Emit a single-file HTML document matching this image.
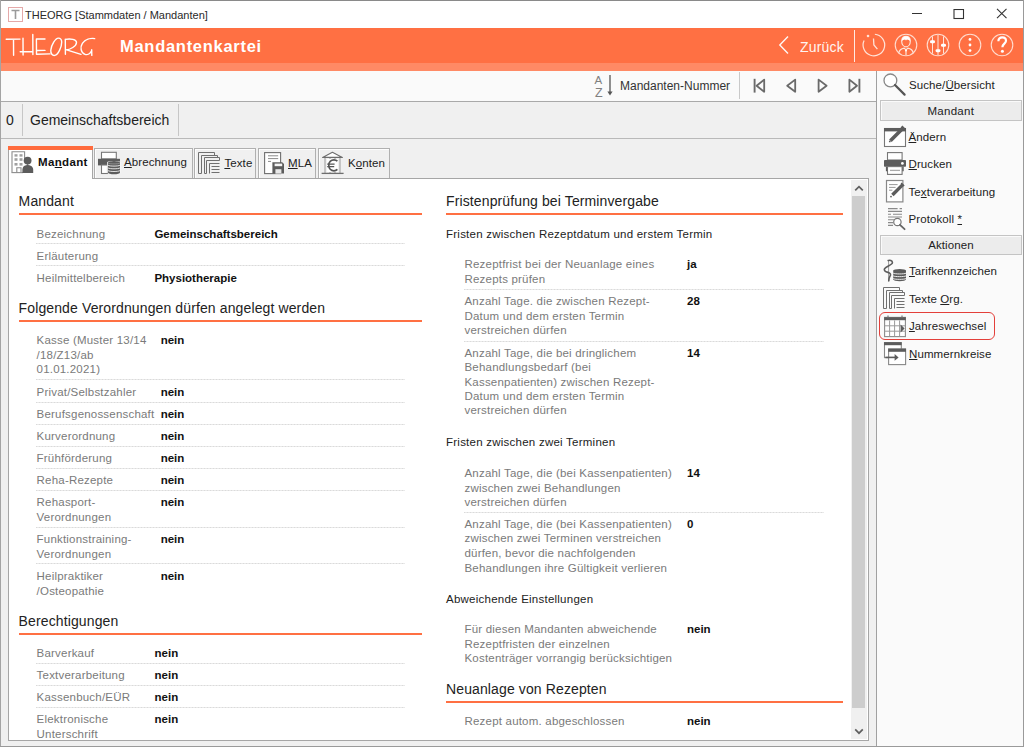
<!DOCTYPE html>
<html><head><meta charset="utf-8">
<style>
*{box-sizing:border-box;margin:0;padding:0}
html,body{width:1024px;height:747px;overflow:hidden;background:#f0f0f0;font-family:"Liberation Sans", sans-serif}
.t{position:absolute;white-space:nowrap}
.r{position:absolute;display:block}
u{text-decoration:underline;text-underline-offset:1px;text-decoration-thickness:1px}
</style></head><body>
<div class="r" style="left:0px;top:0px;width:1024px;height:747px;background:#f0f0f0"></div>
<div class="r" style="left:0px;top:0px;width:1024px;height:28px;background:#fff"></div>
<div class="r" style="left:0px;top:28px;width:1024px;height:35px;background:#ff7043"></div>
<div class="r" style="left:0px;top:63px;width:1024px;height:8px;background:#ff8a65"></div>
<div class="r" style="left:0px;top:71px;width:877px;height:30px;background:#fafafa"></div>
<div class="r" style="left:0px;top:101px;width:877px;height:1px;background:#a9a9a9"></div>
<div class="r" style="left:0px;top:102px;width:877px;height:36px;background:#f0f0f0"></div>
<div class="r" style="left:0px;top:138px;width:877px;height:1px;background:#b9b9b9"></div>
<div class="r" style="left:877px;top:71px;width:147px;height:676px;background:#fafafa"></div>
<div class="r" style="left:876px;top:71px;width:1px;height:676px;background:#a0a0a0"></div>
<div class="r" style="left:0px;top:0px;width:1024px;height:1px;background:#8a8a8a"></div>
<div class="r" style="left:0px;top:0px;width:1px;height:747px;background:#a4a4a4"></div>
<div class="r" style="left:1023px;top:0px;width:1px;height:747px;background:#9a9a9a"></div>
<div class="r" style="left:0px;top:746px;width:1024px;height:1px;background:#9a9a9a"></div>
<svg class="r" style="left:8px;top:7px;" width="15" height="15" viewBox="0 0 15 15"><rect x="0.5" y="0.5" width="14" height="14" fill="#fff" stroke="#e4a9a9"/><path d="M3.5 3.5H11.5M7.5 3.5V12" stroke="#9a9a9a" stroke-width="1.6" fill="none"/></svg>
<div class="t" style="left:25.00px;top:10.00px;font-size:11px;line-height:11px;font-weight:400;color:#2a2a2a;">THEORG [Stammdaten / Mandanten]</div>
<svg class="r" style="left:912px;top:13px;" width="11" height="1" viewBox="0 0 11 1"><rect x="0" y="0" width="10" height="1" fill="#333"/></svg>
<svg class="r" style="left:953px;top:9px;" width="12" height="11" viewBox="0 0 12 11"><rect x="1" y="0.5" width="9.5" height="9" fill="none" stroke="#333" stroke-width="1.1"/></svg>
<svg class="r" style="left:996px;top:8px;" width="12" height="11" viewBox="0 0 12 11"><path d="M1 0.8L10.5 10.2M10.5 0.8L1 10.2" stroke="#333" stroke-width="1.1" fill="none"/></svg>
<svg class="r" style="left:0px;top:28px;" width="100" height="35" viewBox="0 0 100 35"><g transform="translate(0,-28)"><g stroke="#fff" stroke-width="1.4" fill="none" stroke-linecap="round" stroke-linejoin="round"><path d="M6.2 39.3L20 39.1M13.5 39.3L13.6 55.2"/><path d="M23 38.3L23.1 55M20.2 51.8L32.8 51.8M32.8 34.4L32.9 54.5"/><path d="M45 39L36.4 39L36.5 54.2L50 53.9M36.5 50.5L45 50.4"/><path d="M58.4 38.1C55.6 38.1 51.2 44.6 50.8 50.2C50.6 53.8 52.4 55.8 54.8 55.4C58.4 54.6 61.8 46.6 61.7 42C61.6 39.6 60.4 38.1 58.4 38.1Z"/><path d="M65.3 39.1L65.4 54.3M65.3 39.4C70.6 38.4 76.6 39.4 76.5 42.4C76.4 46.2 70.4 49.6 65.6 50M67.4 50.2L81 54.3"/><path d="M94.7 38.6C90.6 38 85.2 39.4 82.4 43.4C80 47 80.6 53 85 54.4C87.6 55.2 90.4 53.6 91.7 50.6M91.7 49.8L91.8 55.4"/></g></g></svg>
<div class="t" style="left:120.00px;top:38.00px;font-size:16.5px;line-height:16.5px;font-weight:700;color:#ffffff;letter-spacing:0.72px">Mandantenkartei</div>
<svg class="r" style="left:777px;top:35px;" width="14" height="20" viewBox="0 0 14 20"><path d="M11 1.5L2.8 10L11 18.5" stroke="#fff" stroke-width="1.4" fill="none" stroke-opacity="0.95"/></svg>
<div class="t" style="left:800.00px;top:40.00px;font-size:14px;line-height:14px;font-weight:400;color:#ffffff;opacity:0.93;letter-spacing:0.2px">Zurück</div>
<div class="r" style="left:854px;top:30px;width:1px;height:32px;background:rgba(255,255,255,0.85)"></div>
<svg class="r" style="left:860px;top:32px;" width="28" height="26" viewBox="0 0 28 26"><path d="M14.84 2.24A10.8 10.8 0 1 1 4.11 8.44" stroke="#ffe3d8" stroke-width="1.2" fill="none"/><circle cx="8.02" cy="3.94" r="1.3" fill="#ffe3d8"/><path d="M13.5 6.5L13.9 13L17.4 17.1" stroke="#ffe3d8" stroke-width="1.3" fill="none"/></svg>
<svg class="r" style="left:893px;top:32px;" width="26" height="26" viewBox="0 0 26 26"><circle cx="13" cy="13" r="10.8" stroke="#ffdccf" stroke-width="1.1" fill="none"/><path d="M8.7 9.2C8.7 5.8 10.6 4.3 13 4.3C15.4 4.3 17.3 5.8 17.3 9.2C17.3 12.4 15.4 14.8 13 14.8C10.6 14.8 8.7 12.4 8.7 9.2Z" stroke="#ffe3d8" stroke-width="1.2" fill="none"/><path d="M8.7 9.2C8.7 5.8 10.6 4.3 13 4.3C15.4 4.3 17.3 5.8 17.3 9.2C16.4 8.2 15.2 7.8 13.9 7.6L13 8.6L12.1 7.6C10.8 7.8 9.6 8.2 8.7 9.2Z" fill="#fff"/><path d="M5.6 21.4C6.2 18.4 8.6 16.6 11.2 16.2L13 18L14.8 16.2C17.4 16.6 19.8 18.4 20.4 21.4M13 18.2V23" stroke="#ffe3d8" stroke-width="1.2" fill="none"/><circle cx="13" cy="18.6" r="1" fill="#fff"/></svg>
<svg class="r" style="left:925px;top:32px;" width="26" height="26" viewBox="0 0 26 26"><circle cx="13" cy="13" r="10.8" stroke="#ffdccf" stroke-width="1.1" fill="none"/><path d="M7.5 4.5V21.5M13 3V23M18.5 4.5V21.5" stroke="#ffe3d8" stroke-width="1" fill="none"/><rect x="5" y="8.3" width="5" height="3" rx="1.4" fill="#fff"/><rect x="10.5" y="17.2" width="5" height="3" rx="1.4" fill="#fff"/><rect x="16" y="11.8" width="5" height="3" rx="1.4" fill="#fff"/></svg>
<svg class="r" style="left:957px;top:32px;" width="26" height="26" viewBox="0 0 26 26"><circle cx="13" cy="13" r="10.8" stroke="#ffdccf" stroke-width="1.1" fill="none"/><circle cx="13" cy="7.4" r="1.4" fill="#fff"/><circle cx="13" cy="13" r="1.4" fill="#fff"/><circle cx="13" cy="18.6" r="1.4" fill="#fff"/></svg>
<svg class="r" style="left:989px;top:32px;" width="26" height="26" viewBox="0 0 26 26"><circle cx="13" cy="13" r="10.8" stroke="#ffdccf" stroke-width="1.1" fill="none"/><path d="M9.4 9.2C9.4 6.6 11 5.4 13.2 5.4C15.6 5.4 17 6.9 17 8.8C17 11.6 13.4 11.8 13.4 15.2" stroke="#fff" stroke-width="2.2" fill="none"/><circle cx="13.4" cy="19.2" r="1.5" fill="#fff"/></svg>
<div class="t" style="left:594.60px;top:75.00px;font-size:11.5px;line-height:11.5px;font-weight:400;color:#808080;">A</div>
<div class="t" style="left:595.00px;top:87.00px;font-size:12.5px;line-height:12.5px;font-weight:400;color:#808080;">Z</div>
<svg class="r" style="left:606px;top:74px;" width="8" height="23" viewBox="0 0 8 23"><path d="M4 1V20" stroke="#555" stroke-width="1.3"/><path d="M1.4 17.5L4 21.5L6.6 17.5Z" fill="#555"/></svg>
<div class="t" style="left:620.00px;top:80.00px;font-size:12px;line-height:12px;font-weight:400;color:#333;">Mandanten-Nummer</div>
<div class="r" style="left:739px;top:72px;width:1px;height:27px;background:#c9c9c9"></div>
<svg class="r" style="left:753px;top:78px;" width="14" height="16" viewBox="0 0 14 16"><path d="M1.6 0.8V14.6" stroke="#6a6a6a" stroke-width="1.9"/><path d="M11.2 1.6L3.6 7.7L11.2 13.8Z" stroke="#6a6a6a" stroke-width="1.8" fill="none" stroke-linejoin="round"/></svg>
<svg class="r" style="left:784px;top:78px;" width="14" height="16" viewBox="0 0 14 16"><path d="M11.2 1.6L3.2 7.7L11.2 13.8Z" stroke="#6a6a6a" stroke-width="1.8" fill="none" stroke-linejoin="round"/></svg>
<svg class="r" style="left:817px;top:78px;" width="14" height="16" viewBox="0 0 14 16"><path d="M1.6 1.6L9.6 7.7L1.6 13.8Z" stroke="#6a6a6a" stroke-width="1.8" fill="none" stroke-linejoin="round"/></svg>
<svg class="r" style="left:848px;top:78px;" width="14" height="16" viewBox="0 0 14 16"><path d="M1.4 1.6L9 7.7L1.4 13.8Z" stroke="#6a6a6a" stroke-width="1.8" fill="none" stroke-linejoin="round"/><path d="M11.4 0.8V14.6" stroke="#6a6a6a" stroke-width="1.9"/></svg>
<div class="t" style="left:6.00px;top:113.00px;font-size:14px;line-height:14px;font-weight:400;color:#222;">0</div>
<div class="r" style="left:22px;top:104px;width:1px;height:32px;background:#c6c6c6"></div>
<div class="t" style="left:30.00px;top:113.00px;font-size:14px;line-height:14px;font-weight:400;color:#222;">Gemeinschaftsbereich</div>
<div class="r" style="left:178px;top:104px;width:1px;height:32px;background:#c6c6c6"></div>
<div class="r" style="left:94px;top:148px;width:99px;height:30px;background:#f0f0f0;border:1px solid #b0b0b0;border-bottom:none;box-shadow:inset 1px 1px 0 #fdfdfd"></div>
<div class="r" style="left:194px;top:148px;width:62px;height:30px;background:#f0f0f0;border:1px solid #b0b0b0;border-bottom:none;box-shadow:inset 1px 1px 0 #fdfdfd"></div>
<div class="r" style="left:258px;top:148px;width:58px;height:30px;background:#f0f0f0;border:1px solid #b0b0b0;border-bottom:none;box-shadow:inset 1px 1px 0 #fdfdfd"></div>
<div class="r" style="left:318px;top:148px;width:72px;height:30px;background:#f0f0f0;border:1px solid #b0b0b0;border-bottom:none;box-shadow:inset 1px 1px 0 #fdfdfd"></div>
<div class="r" style="left:8px;top:178px;width:861px;height:563px;background:#fff;border:1px solid #a6a6a6"></div>
<div class="r" style="left:8px;top:146px;width:85px;height:33px;background:#fff;border-left:1px solid #a6a6a6;border-right:1px solid #a6a6a6"></div>
<div class="r" style="left:8px;top:146px;width:85px;height:4px;background:#ff6b3d"></div>
<div class="t" style="left:38.00px;top:157.00px;font-size:11.5px;line-height:11.5px;font-weight:700;color:#111;letter-spacing:0.35px;">Ma<u>n</u>dant</div>
<div class="t" style="left:124.00px;top:157.00px;font-size:11.5px;line-height:11.5px;font-weight:400;color:#222;letter-spacing:0.1px;"><u>A</u>brechnung</div>
<div class="t" style="left:224.40px;top:158.00px;font-size:11.5px;line-height:11.5px;font-weight:400;color:#222;letter-spacing:0.1px;"><u>T</u>exte</div>
<div class="t" style="left:288.00px;top:158.00px;font-size:11.5px;line-height:11.5px;font-weight:400;color:#222;letter-spacing:0.1px;"><u>M</u>LA</div>
<div class="t" style="left:348.00px;top:158.00px;font-size:11.5px;line-height:11.5px;font-weight:400;color:#222;letter-spacing:0.1px;">K<u>o</u>nten</div>
<svg class="r" style="left:10px;top:150px;" width="26" height="25" viewBox="0 0 26 25"><path d="M2 22.5V1.8H14.6V12" stroke="#8c8c8c" stroke-width="1.1" fill="none"/><g fill="#a0a0a0"><rect x="4.5" y="4.2" width="3" height="2.4"/><rect x="9.5" y="4.2" width="3" height="2.4"/><rect x="4.5" y="8.2" width="3" height="2.6"/><rect x="9.5" y="8.2" width="3" height="2.6"/><rect x="4.5" y="13" width="3" height="2.6"/><rect x="9.5" y="13" width="3" height="2.6"/></g><path d="M6.8 22.5V17.8H11V22.5" stroke="#8c8c8c" stroke-width="1.1" fill="none"/><path d="M1.5 22.6H13" stroke="#8c8c8c" stroke-width="1.1"/><circle cx="17.6" cy="10.6" r="3.9" fill="#5c5c5c"/><path d="M12.4 23V19.4C12.4 16.6 14.6 15.4 16.4 15.2L17.6 14L18.8 15.2C20.6 15.4 23.2 16.6 23.2 19.4V23Z" fill="#5c5c5c"/></svg>
<svg class="r" style="left:96px;top:150px;" width="26" height="25" viewBox="0 0 26 25"><rect x="5.5" y="2.3" width="14.8" height="6.6" fill="#fff" stroke="#777" stroke-width="1.1"/><rect x="2" y="8.8" width="22" height="6.6" fill="#5c5c5c"/><rect x="5.5" y="15" width="6" height="8.5" fill="#fff" stroke="#777" stroke-width="1.1"/><path d="M11.2 12.4C11.2 10.6 24.8 10.6 24.8 12.4V22.6C24.8 24.6 11.2 24.6 11.2 22.6Z" fill="#f6f6f6"/><g fill="#5c5c5c"><ellipse cx="18" cy="12.6" rx="6" ry="1.7"/><rect x="12" y="12.6" width="12" height="9.9"/><ellipse cx="18" cy="22.5" rx="6" ry="1.7"/></g><path d="M12 15.2C13.6 16.4 22.4 16.4 24 15.2M12 17.9C13.6 19.1 22.4 19.1 24 17.9M12 20.6C13.6 21.8 22.4 21.8 24 20.6" stroke="#f0f0f0" stroke-width="0.9" fill="none"/><path d="M12 13C13.6 14.2 22.4 14.2 24 13" stroke="#aaa" stroke-width="0.6" fill="none"/></svg>
<svg class="r" style="left:197px;top:151px;" width="24" height="24" viewBox="0 0 24 24"><g stroke="#707070" stroke-width="1" fill="none"><path d="M1.5 22.5V1.5H17.5V4.5"/><path d="M4.5 22.5V4.5H20.5V6.5"/><path d="M7.5 22.5V6.5H22.5V9.5"/><path d="M9.5 22.5V9.5H22.5"/><path d="M12.5 22.5V12.5H22.5"/><path d="M1.5 22.5H4.5M7.5 22.5H9.5"/><path d="M14.5 15.5H22.5M14.5 18.5H22.5M14.5 21.5H22.5"/></g></svg>
<svg class="r" style="left:262px;top:150px;" width="26" height="25" viewBox="0 0 26 25"><rect x="2.6" y="2.6" width="16" height="21" fill="#fff" stroke="#6e6e6e" stroke-width="1.1"/><path d="M6 5.8H16.2M6 8.6H16.2M6 11.4H9" stroke="#8a8a8a" stroke-width="1"/><path d="M10.4 12.2H20.2L22 14V23.6H10.4Z" fill="#5c5c5c"/><rect x="12.6" y="13.6" width="7.6" height="2.6" fill="#f4f4f4"/><rect x="13.4" y="19.2" width="6" height="4.4" fill="#e8e8e8"/></svg>
<svg class="r" style="left:320px;top:150px;" width="26" height="25" viewBox="0 0 26 25"><path d="M2.6 7.4L12.4 2.2L22.4 7.4Z" fill="#fff" stroke="#6e6e6e" stroke-width="1.1" stroke-linejoin="round"/><path d="M5 8V23M10 8V23M15 8V23M20 8V23" stroke="#9a9a9a" stroke-width="1"/><path d="M1.6 23.4H23.6" stroke="#6e6e6e" stroke-width="1.3"/><path d="M2 23H23" stroke="none"/><rect x="7" y="9" width="11" height="13" fill="#fff"/><path d="M17.4 11.2C16.4 10.2 15.2 9.8 14 9.8C10.9 9.8 8.8 12.3 8.8 15.3C8.8 18.3 10.9 20.8 14 20.8C15.2 20.8 16.4 20.4 17.4 19.4" stroke="#555" stroke-width="1.7" fill="none"/><path d="M7.2 14.1H14.6M7.2 16.7H14.2" stroke="#555" stroke-width="1.2"/></svg>
<div class="r" style="left:851px;top:180px;width:16px;height:559px;background:#f0f0f0"></div>
<div class="r" style="left:852px;top:196px;width:13px;height:512px;background:#cdcdcd"></div>
<svg class="r" style="left:852px;top:183px;" width="14" height="11" viewBox="0 0 14 11"><path d="M3.2 7.4L7 3.6L10.8 7.4" stroke="#606060" stroke-width="1.7" fill="none"/></svg>
<svg class="r" style="left:852px;top:726px;" width="14" height="11" viewBox="0 0 14 11"><path d="M3.2 3.4L7 7.2L10.8 3.4" stroke="#606060" stroke-width="1.7" fill="none"/></svg>
<div class="t" style="left:18.60px;top:194.00px;font-size:14px;line-height:14px;font-weight:400;color:#222;letter-spacing:0.12px;">Mandant</div>
<div class="r" style="left:18.6px;top:213px;width:403.4px;height:2px;background:#ff7043"></div>
<div class="t" style="left:36.60px;top:229.00px;font-size:11.5px;line-height:11.5px;font-weight:400;color:#7a7a7a;letter-spacing:0.2px;">Bezeichnung</div>
<div class="t" style="left:154.40px;top:229.00px;font-size:11.5px;line-height:11.5px;font-weight:700;color:#111;">Gemeinschaftsbereich</div>
<div class="r" style="left:36px;top:243px;width:369px;height:1px;background-image:linear-gradient(90deg,#dadada 50%,#e9e9e9 50%);background-size:3px 1px"></div>
<div class="t" style="left:36.60px;top:251.00px;font-size:11.5px;line-height:11.5px;font-weight:400;color:#7a7a7a;letter-spacing:0.2px;">Erläuterung</div>
<div class="r" style="left:36px;top:265px;width:369px;height:1px;background-image:linear-gradient(90deg,#dadada 50%,#e9e9e9 50%);background-size:3px 1px"></div>
<div class="t" style="left:36.60px;top:273.00px;font-size:11.5px;line-height:11.5px;font-weight:400;color:#7a7a7a;letter-spacing:0.2px;">Heilmittelbereich</div>
<div class="t" style="left:154.40px;top:273.00px;font-size:11.5px;line-height:11.5px;font-weight:700;color:#111;">Physiotherapie</div>
<div class="t" style="left:18.60px;top:301.00px;font-size:14px;line-height:14px;font-weight:400;color:#222;letter-spacing:0.12px;">Folgende Verordnungen dürfen angelegt werden</div>
<div class="r" style="left:18.6px;top:320px;width:403.4px;height:2px;background:#ff7043"></div>
<div class="t" style="left:36.60px;top:335.00px;font-size:11.5px;line-height:11.5px;font-weight:400;color:#7a7a7a;letter-spacing:0.2px;">Kasse (Muster 13/14</div>
<div class="t" style="left:36.60px;top:350.00px;font-size:11.5px;line-height:11.5px;font-weight:400;color:#7a7a7a;letter-spacing:0.2px;">/18/Z13/ab</div>
<div class="t" style="left:36.60px;top:364.00px;font-size:11.5px;line-height:11.5px;font-weight:400;color:#7a7a7a;letter-spacing:0.2px;">01.01.2021)</div>
<div class="t" style="left:160.70px;top:335.00px;font-size:11.5px;line-height:11.5px;font-weight:700;color:#111;">nein</div>
<div class="r" style="left:36px;top:379px;width:369px;height:1px;background-image:linear-gradient(90deg,#dadada 50%,#e9e9e9 50%);background-size:3px 1px"></div>
<div class="t" style="left:36.60px;top:387.00px;font-size:11.5px;line-height:11.5px;font-weight:400;color:#7a7a7a;letter-spacing:0.2px;">Privat/Selbstzahler</div>
<div class="t" style="left:160.70px;top:387.00px;font-size:11.5px;line-height:11.5px;font-weight:700;color:#111;">nein</div>
<div class="r" style="left:36px;top:402px;width:369px;height:1px;background-image:linear-gradient(90deg,#dadada 50%,#e9e9e9 50%);background-size:3px 1px"></div>
<div class="t" style="left:36.60px;top:409.00px;font-size:11.5px;line-height:11.5px;font-weight:400;color:#7a7a7a;letter-spacing:0.2px;">Berufsgenossenschaft</div>
<div class="t" style="left:160.70px;top:409.00px;font-size:11.5px;line-height:11.5px;font-weight:700;color:#111;">nein</div>
<div class="r" style="left:36px;top:424px;width:369px;height:1px;background-image:linear-gradient(90deg,#dadada 50%,#e9e9e9 50%);background-size:3px 1px"></div>
<div class="t" style="left:36.60px;top:431.00px;font-size:11.5px;line-height:11.5px;font-weight:400;color:#7a7a7a;letter-spacing:0.2px;">Kurverordnung</div>
<div class="t" style="left:160.70px;top:431.00px;font-size:11.5px;line-height:11.5px;font-weight:700;color:#111;">nein</div>
<div class="r" style="left:36px;top:446px;width:369px;height:1px;background-image:linear-gradient(90deg,#dadada 50%,#e9e9e9 50%);background-size:3px 1px"></div>
<div class="t" style="left:36.60px;top:453.00px;font-size:11.5px;line-height:11.5px;font-weight:400;color:#7a7a7a;letter-spacing:0.2px;">Frühförderung</div>
<div class="t" style="left:160.70px;top:453.00px;font-size:11.5px;line-height:11.5px;font-weight:700;color:#111;">nein</div>
<div class="r" style="left:36px;top:468px;width:369px;height:1px;background-image:linear-gradient(90deg,#dadada 50%,#e9e9e9 50%);background-size:3px 1px"></div>
<div class="t" style="left:36.60px;top:475.00px;font-size:11.5px;line-height:11.5px;font-weight:400;color:#7a7a7a;letter-spacing:0.2px;">Reha-Rezepte</div>
<div class="t" style="left:160.70px;top:475.00px;font-size:11.5px;line-height:11.5px;font-weight:700;color:#111;">nein</div>
<div class="r" style="left:36px;top:490px;width:369px;height:1px;background-image:linear-gradient(90deg,#dadada 50%,#e9e9e9 50%);background-size:3px 1px"></div>
<div class="t" style="left:36.60px;top:497.00px;font-size:11.5px;line-height:11.5px;font-weight:400;color:#7a7a7a;letter-spacing:0.2px;">Rehasport-</div>
<div class="t" style="left:36.60px;top:512.00px;font-size:11.5px;line-height:11.5px;font-weight:400;color:#7a7a7a;letter-spacing:0.2px;">Verordnungen</div>
<div class="t" style="left:160.70px;top:497.00px;font-size:11.5px;line-height:11.5px;font-weight:700;color:#111;">nein</div>
<div class="r" style="left:36px;top:527px;width:369px;height:1px;background-image:linear-gradient(90deg,#dadada 50%,#e9e9e9 50%);background-size:3px 1px"></div>
<div class="t" style="left:36.60px;top:534.00px;font-size:11.5px;line-height:11.5px;font-weight:400;color:#7a7a7a;letter-spacing:0.2px;">Funktionstraining-</div>
<div class="t" style="left:36.60px;top:549.00px;font-size:11.5px;line-height:11.5px;font-weight:400;color:#7a7a7a;letter-spacing:0.2px;">Verordnungen</div>
<div class="t" style="left:160.70px;top:534.00px;font-size:11.5px;line-height:11.5px;font-weight:700;color:#111;">nein</div>
<div class="r" style="left:36px;top:563px;width:369px;height:1px;background-image:linear-gradient(90deg,#dadada 50%,#e9e9e9 50%);background-size:3px 1px"></div>
<div class="t" style="left:36.60px;top:571.00px;font-size:11.5px;line-height:11.5px;font-weight:400;color:#7a7a7a;letter-spacing:0.2px;">Heilpraktiker</div>
<div class="t" style="left:36.60px;top:586.00px;font-size:11.5px;line-height:11.5px;font-weight:400;color:#7a7a7a;letter-spacing:0.2px;">/Osteopathie</div>
<div class="t" style="left:160.70px;top:571.00px;font-size:11.5px;line-height:11.5px;font-weight:700;color:#111;">nein</div>
<div class="t" style="left:18.60px;top:614.00px;font-size:14px;line-height:14px;font-weight:400;color:#222;letter-spacing:0.12px;">Berechtigungen</div>
<div class="r" style="left:18.6px;top:633px;width:403.4px;height:2px;background:#ff7043"></div>
<div class="t" style="left:36.60px;top:648.00px;font-size:11.5px;line-height:11.5px;font-weight:400;color:#7a7a7a;letter-spacing:0.2px;">Barverkauf</div>
<div class="t" style="left:154.60px;top:648.00px;font-size:11.5px;line-height:11.5px;font-weight:700;color:#111;">nein</div>
<div class="r" style="left:36px;top:663px;width:369px;height:1px;background-image:linear-gradient(90deg,#dadada 50%,#e9e9e9 50%);background-size:3px 1px"></div>
<div class="t" style="left:36.60px;top:670.00px;font-size:11.5px;line-height:11.5px;font-weight:400;color:#7a7a7a;letter-spacing:0.2px;">Textverarbeitung</div>
<div class="t" style="left:154.60px;top:670.00px;font-size:11.5px;line-height:11.5px;font-weight:700;color:#111;">nein</div>
<div class="r" style="left:36px;top:685px;width:369px;height:1px;background-image:linear-gradient(90deg,#dadada 50%,#e9e9e9 50%);background-size:3px 1px"></div>
<div class="t" style="left:36.60px;top:692.00px;font-size:11.5px;line-height:11.5px;font-weight:400;color:#7a7a7a;letter-spacing:0.2px;">Kassenbuch/EÜR</div>
<div class="t" style="left:154.60px;top:692.00px;font-size:11.5px;line-height:11.5px;font-weight:700;color:#111;">nein</div>
<div class="r" style="left:36px;top:707px;width:369px;height:1px;background-image:linear-gradient(90deg,#dadada 50%,#e9e9e9 50%);background-size:3px 1px"></div>
<div class="t" style="left:36.60px;top:714.00px;font-size:11.5px;line-height:11.5px;font-weight:400;color:#7a7a7a;letter-spacing:0.2px;">Elektronische</div>
<div class="t" style="left:36.60px;top:729.00px;font-size:11.5px;line-height:11.5px;font-weight:400;color:#7a7a7a;letter-spacing:0.2px;">Unterschrift</div>
<div class="t" style="left:154.60px;top:714.00px;font-size:11.5px;line-height:11.5px;font-weight:700;color:#111;">nein</div>
<div class="t" style="left:446.00px;top:194.00px;font-size:14px;line-height:14px;font-weight:400;color:#222;letter-spacing:0.12px;">Fristenprüfung bei Terminvergabe</div>
<div class="r" style="left:446px;top:213px;width:397px;height:2px;background:#ff7043"></div>
<div class="t" style="left:446.00px;top:229.00px;font-size:11.5px;line-height:11.5px;font-weight:400;color:#222;letter-spacing:0.24px;">Fristen zwischen Rezeptdatum und erstem Termin</div>
<div class="t" style="left:464.50px;top:259.00px;font-size:11.5px;line-height:11.5px;font-weight:400;color:#7a7a7a;letter-spacing:0.2px;">Rezeptfrist bei der Neuanlage eines</div>
<div class="t" style="left:464.50px;top:274.00px;font-size:11.5px;line-height:11.5px;font-weight:400;color:#7a7a7a;letter-spacing:0.2px;">Rezepts prüfen</div>
<div class="t" style="left:687.00px;top:259.00px;font-size:11.5px;line-height:11.5px;font-weight:700;color:#111;">ja</div>
<div class="r" style="left:464px;top:289px;width:360px;height:1px;background-image:linear-gradient(90deg,#dadada 50%,#e9e9e9 50%);background-size:3px 1px"></div>
<div class="t" style="left:464.50px;top:296.00px;font-size:11.5px;line-height:11.5px;font-weight:400;color:#7a7a7a;letter-spacing:0.2px;">Anzahl Tage. die zwischen Rezept-</div>
<div class="t" style="left:464.50px;top:311.00px;font-size:11.5px;line-height:11.5px;font-weight:400;color:#7a7a7a;letter-spacing:0.2px;">Datum und dem ersten Termin</div>
<div class="t" style="left:464.50px;top:325.00px;font-size:11.5px;line-height:11.5px;font-weight:400;color:#7a7a7a;letter-spacing:0.2px;">verstreichen dürfen</div>
<div class="t" style="left:687.00px;top:296.00px;font-size:11.5px;line-height:11.5px;font-weight:700;color:#111;">28</div>
<div class="r" style="left:464px;top:341px;width:360px;height:1px;background-image:linear-gradient(90deg,#dadada 50%,#e9e9e9 50%);background-size:3px 1px"></div>
<div class="t" style="left:464.50px;top:348.00px;font-size:11.5px;line-height:11.5px;font-weight:400;color:#7a7a7a;letter-spacing:0.2px;">Anzahl Tage, die bei dringlichem</div>
<div class="t" style="left:464.50px;top:362.00px;font-size:11.5px;line-height:11.5px;font-weight:400;color:#7a7a7a;letter-spacing:0.2px;">Behandlungsbedarf (bei</div>
<div class="t" style="left:464.50px;top:377.00px;font-size:11.5px;line-height:11.5px;font-weight:400;color:#7a7a7a;letter-spacing:0.2px;">Kassenpatienten) zwischen Rezept-</div>
<div class="t" style="left:464.50px;top:391.00px;font-size:11.5px;line-height:11.5px;font-weight:400;color:#7a7a7a;letter-spacing:0.2px;">Datum und dem ersten Termin</div>
<div class="t" style="left:464.50px;top:405.00px;font-size:11.5px;line-height:11.5px;font-weight:400;color:#7a7a7a;letter-spacing:0.2px;">verstreichen dürfen</div>
<div class="t" style="left:687.00px;top:348.00px;font-size:11.5px;line-height:11.5px;font-weight:700;color:#111;">14</div>
<div class="t" style="left:446.00px;top:437.00px;font-size:11.5px;line-height:11.5px;font-weight:400;color:#222;letter-spacing:0.24px;">Fristen zwischen zwei Terminen</div>
<div class="t" style="left:464.50px;top:468.00px;font-size:11.5px;line-height:11.5px;font-weight:400;color:#7a7a7a;letter-spacing:0.2px;">Anzahl Tage, die (bei Kassenpatienten)</div>
<div class="t" style="left:464.50px;top:483.00px;font-size:11.5px;line-height:11.5px;font-weight:400;color:#7a7a7a;letter-spacing:0.2px;">zwischen zwei Behandlungen</div>
<div class="t" style="left:464.50px;top:497.00px;font-size:11.5px;line-height:11.5px;font-weight:400;color:#7a7a7a;letter-spacing:0.2px;">verstreichen dürfen</div>
<div class="t" style="left:687.00px;top:468.00px;font-size:11.5px;line-height:11.5px;font-weight:700;color:#111;">14</div>
<div class="r" style="left:464px;top:512px;width:360px;height:1px;background-image:linear-gradient(90deg,#dadada 50%,#e9e9e9 50%);background-size:3px 1px"></div>
<div class="t" style="left:464.50px;top:519.00px;font-size:11.5px;line-height:11.5px;font-weight:400;color:#7a7a7a;letter-spacing:0.2px;">Anzahl Tage, die (bei Kassenpatienten)</div>
<div class="t" style="left:464.50px;top:533.00px;font-size:11.5px;line-height:11.5px;font-weight:400;color:#7a7a7a;letter-spacing:0.2px;">zwischen zwei Terminen verstreichen</div>
<div class="t" style="left:464.50px;top:548.00px;font-size:11.5px;line-height:11.5px;font-weight:400;color:#7a7a7a;letter-spacing:0.2px;">dürfen, bevor die nachfolgenden</div>
<div class="t" style="left:464.50px;top:563.00px;font-size:11.5px;line-height:11.5px;font-weight:400;color:#7a7a7a;letter-spacing:0.2px;">Behandlungen ihre Gültigkeit verlieren</div>
<div class="t" style="left:687.00px;top:519.00px;font-size:11.5px;line-height:11.5px;font-weight:700;color:#111;">0</div>
<div class="t" style="left:446.00px;top:594.00px;font-size:11.5px;line-height:11.5px;font-weight:400;color:#222;letter-spacing:0.24px;">Abweichende Einstellungen</div>
<div class="t" style="left:464.50px;top:624.00px;font-size:11.5px;line-height:11.5px;font-weight:400;color:#7a7a7a;letter-spacing:0.2px;">Für diesen Mandanten abweichende</div>
<div class="t" style="left:464.50px;top:639.00px;font-size:11.5px;line-height:11.5px;font-weight:400;color:#7a7a7a;letter-spacing:0.2px;">Rezeptfristen der einzelnen</div>
<div class="t" style="left:464.50px;top:653.00px;font-size:11.5px;line-height:11.5px;font-weight:400;color:#7a7a7a;letter-spacing:0.2px;">Kostenträger vorrangig berücksichtigen</div>
<div class="t" style="left:687.00px;top:624.00px;font-size:11.5px;line-height:11.5px;font-weight:700;color:#111;">nein</div>
<div class="t" style="left:446.00px;top:682.00px;font-size:14px;line-height:14px;font-weight:400;color:#222;letter-spacing:0.12px;">Neuanlage von Rezepten</div>
<div class="r" style="left:446px;top:701px;width:397px;height:2px;background:#ff7043"></div>
<div class="t" style="left:464.50px;top:716.00px;font-size:11.5px;line-height:11.5px;font-weight:400;color:#7a7a7a;letter-spacing:0.2px;">Rezept autom. abgeschlossen</div>
<div class="t" style="left:687.00px;top:716.00px;font-size:11.5px;line-height:11.5px;font-weight:700;color:#111;">nein</div>
<svg class="r" style="left:882px;top:72px;" width="26" height="26" viewBox="0 0 26 26"><circle cx="8.4" cy="8.4" r="6.4" fill="#fff" stroke="#888" stroke-width="1.3"/><path d="M13 13L22.6 22.6" stroke="#555" stroke-width="2.2" stroke-linecap="round"/></svg>
<div class="t" style="left:909.00px;top:80.00px;font-size:11.5px;line-height:11.5px;font-weight:400;color:#222;letter-spacing:0.1px;">Suche/<u>Ü</u>bersicht</div>
<div class="r" style="left:880px;top:100px;width:142px;height:21px;background:#ececec;border:1px solid #c4c4c4;box-shadow:inset 1px 1px 0 #fafafa"></div>
<div class="t" style="left:927.40px;top:106.00px;font-size:11.5px;line-height:11.5px;font-weight:400;color:#222;letter-spacing:0.3px;">Mandant</div>
<svg class="r" style="left:883px;top:124px;" width="24" height="24" viewBox="0 0 24 24"><rect x="1.5" y="4.5" width="21" height="18" fill="#fff" stroke="#777" stroke-width="1.1"/><rect x="1" y="4" width="22" height="3.4" fill="#5c5c5c"/><path d="M7.4 16.8L20.4 3.8" stroke="#5c5c5c" stroke-width="3.6"/><path d="M19.4 1.6L22.6 4.8L20.8 6.6L17.6 3.4Z" fill="#5c5c5c"/><circle cx="6.8" cy="17.4" r="0.9" fill="#5c5c5c"/></svg>
<div class="t" style="left:908.50px;top:132.00px;font-size:11.5px;line-height:11.5px;font-weight:400;color:#222;letter-spacing:0.1px;"><u>Ä</u>ndern</div>
<svg class="r" style="left:883px;top:151px;" width="24" height="25" viewBox="0 0 24 25"><rect x="4.5" y="1.6" width="14.6" height="7.4" fill="#fff" stroke="#777" stroke-width="1.1"/><rect x="1" y="9" width="22" height="6.8" rx="0.8" fill="#5c5c5c"/><circle cx="19.4" cy="12.4" r="1.4" fill="#fff"/><rect x="4.5" y="15.6" width="14.6" height="7.8" fill="#fff" stroke="#777" stroke-width="1.1"/><path d="M7 19.4H17" stroke="#aaa" stroke-width="1.3"/><path d="M3.6 15.8V20.2M20 15.8V20.2" stroke="#5c5c5c" stroke-width="1.4"/></svg>
<div class="t" style="left:908.50px;top:159.00px;font-size:11.5px;line-height:11.5px;font-weight:400;color:#222;letter-spacing:0.1px;"><u>D</u>rucken</div>
<svg class="r" style="left:883px;top:178px;" width="24" height="26" viewBox="0 0 24 26"><rect x="3.5" y="2.5" width="16.4" height="21.4" fill="#fff" stroke="#888" stroke-width="1.2"/><path d="M6 6.6H14.6M6 9.4H12.6M6 12.2H9.4" stroke="#999" stroke-width="1"/><path d="M9.4 17L20 6.4" stroke="#5c5c5c" stroke-width="3.4"/><path d="M18.6 4.4L21.6 7.4L20.6 8.4L17.6 5.4Z" fill="#5c5c5c"/><circle cx="8" cy="18.6" r="0.9" fill="#5c5c5c"/></svg>
<div class="t" style="left:908.50px;top:187.00px;font-size:11.5px;line-height:11.5px;font-weight:400;color:#222;letter-spacing:0.1px;">Te<u>x</u>tverarbeitung</div>
<svg class="r" style="left:883px;top:206px;" width="25" height="25" viewBox="0 0 25 25"><g stroke="#8a8a8a" stroke-width="1.1"><path d="M5 2.6H14.6M16.6 2.6H19M5 5.4H19M5 8.2H8M10 8.2H19M5 11H19M5 13.8H11M5 16.6H10M5 19.4H10"/></g><circle cx="14.4" cy="16" r="3.7" fill="#fff" stroke="#777" stroke-width="1.2"/><path d="M17 18.8L21.6 23.2" stroke="#666" stroke-width="1.8" stroke-linecap="round"/></svg>
<div class="t" style="left:908.50px;top:214.00px;font-size:11.5px;line-height:11.5px;font-weight:400;color:#222;letter-spacing:0.1px;">Protokoll <u>*</u></div>
<div class="r" style="left:880px;top:235px;width:142px;height:20px;background:#ececec;border:1px solid #c4c4c4;box-shadow:inset 1px 1px 0 #fafafa"></div>
<div class="t" style="left:928.20px;top:240.00px;font-size:11.5px;line-height:11.5px;font-weight:400;color:#222;letter-spacing:0.1px;">Aktionen</div>
<svg class="r" style="left:882px;top:259px;" width="26" height="24" viewBox="0 0 26 24"><path d="M6.6 1V22.5" stroke="#9a9a9a" stroke-width="1"/><path d="M5.6 1.8C7.6 0.6 10.6 1.6 10.4 3.8C10.2 6 4.4 7.4 2.8 9.4C1.6 11 3 12.6 5.2 13.1C7.6 13.6 9.4 14.8 8 17.2C7.2 18.6 6.6 20.2 6.8 22.4" stroke="#5c5c5c" stroke-width="1.6" fill="none"/><g fill="#5c5c5c"><ellipse cx="17.6" cy="11.6" rx="6.4" ry="1.6"/><rect x="11.2" y="11.6" width="12.8" height="9"/><ellipse cx="17.6" cy="20.6" rx="6.4" ry="1.6"/></g><path d="M11.2 14.2C13 15.2 22.2 15.2 24 14.2M11.2 16.9C13 17.9 22.2 17.9 24 16.9M11.2 19.6C13 20.6 22.2 20.6 24 19.6" stroke="#fafafa" stroke-width="0.9" fill="none"/></svg>
<div class="t" style="left:909.00px;top:266.00px;font-size:11.5px;line-height:11.5px;font-weight:400;color:#222;letter-spacing:0.1px;"><u>T</u>arifkennzeichen</div>
<svg class="r" style="left:882px;top:286px;" width="24" height="24" viewBox="0 0 24 24"><g stroke="#707070" stroke-width="1" fill="none"><path d="M1.5 22.5V1.5H17.5V4.5"/><path d="M4.5 22.5V4.5H20.5V6.5"/><path d="M7.5 22.5V6.5H22.5V9.5"/><path d="M9.5 22.5V9.5H22.5"/><path d="M12.5 22.5V12.5H22.5"/><path d="M1.5 22.5H4.5M7.5 22.5H9.5"/><path d="M14.5 15.5H22.5M14.5 18.5H22.5M14.5 21.5H22.5"/></g></svg>
<div class="t" style="left:909.00px;top:294.00px;font-size:11.5px;line-height:11.5px;font-weight:400;color:#222;letter-spacing:0.1px;">Texte <u>O</u>rg.</div>
<div class="r" style="left:879px;top:312px;width:116px;height:28px;border:1.7px solid #e3403a;border-radius:6px"></div>
<svg class="r" style="left:883px;top:314px;" width="24" height="24" viewBox="0 0 24 24"><rect x="1.6" y="3.4" width="20.8" height="19.2" fill="#fff" stroke="#8a8a8a" stroke-width="1.1"/><rect x="1.2" y="3.2" width="21.6" height="3" fill="#5c5c5c"/><path d="M5 1.4V3.6M19 1.4V3.6" stroke="#777" stroke-width="1.2"/><g stroke="#9a9a9a" stroke-width="1"><path d="M6.6 6.4V22.4M11.6 6.4V22.4M16.6 6.4V22.4M1.6 11.8H22.4M1.6 17.2H22.4"/></g><path d="M17.6 10.4L21.6 14.4L17.6 18.4Z" fill="#5c5c5c"/></svg>
<div class="t" style="left:909.00px;top:321.00px;font-size:11.5px;line-height:11.5px;font-weight:400;color:#222;letter-spacing:0.1px;"><u>J</u>ahreswechsel</div>
<svg class="r" style="left:883px;top:341px;" width="24" height="25" viewBox="0 0 24 25"><rect x="1.5" y="1.6" width="16.8" height="15" fill="#fff" stroke="#888" stroke-width="1.1"/><rect x="1" y="1.2" width="17.6" height="3" fill="#5c5c5c"/><rect x="5.6" y="8" width="17" height="15.6" fill="#fff" stroke="#888" stroke-width="1.1"/><rect x="5.2" y="7.6" width="17.8" height="3.2" fill="#5c5c5c"/><path d="M2.4 16.4H12.6" stroke="#5c5c5c" stroke-width="1.6"/><path d="M11.6 13L15.6 16.4L11.6 19.8Z" fill="#5c5c5c"/></svg>
<div class="t" style="left:909.00px;top:349.00px;font-size:11.5px;line-height:11.5px;font-weight:400;color:#222;letter-spacing:0.1px;"><u>N</u>ummernkreise</div>
</body></html>
